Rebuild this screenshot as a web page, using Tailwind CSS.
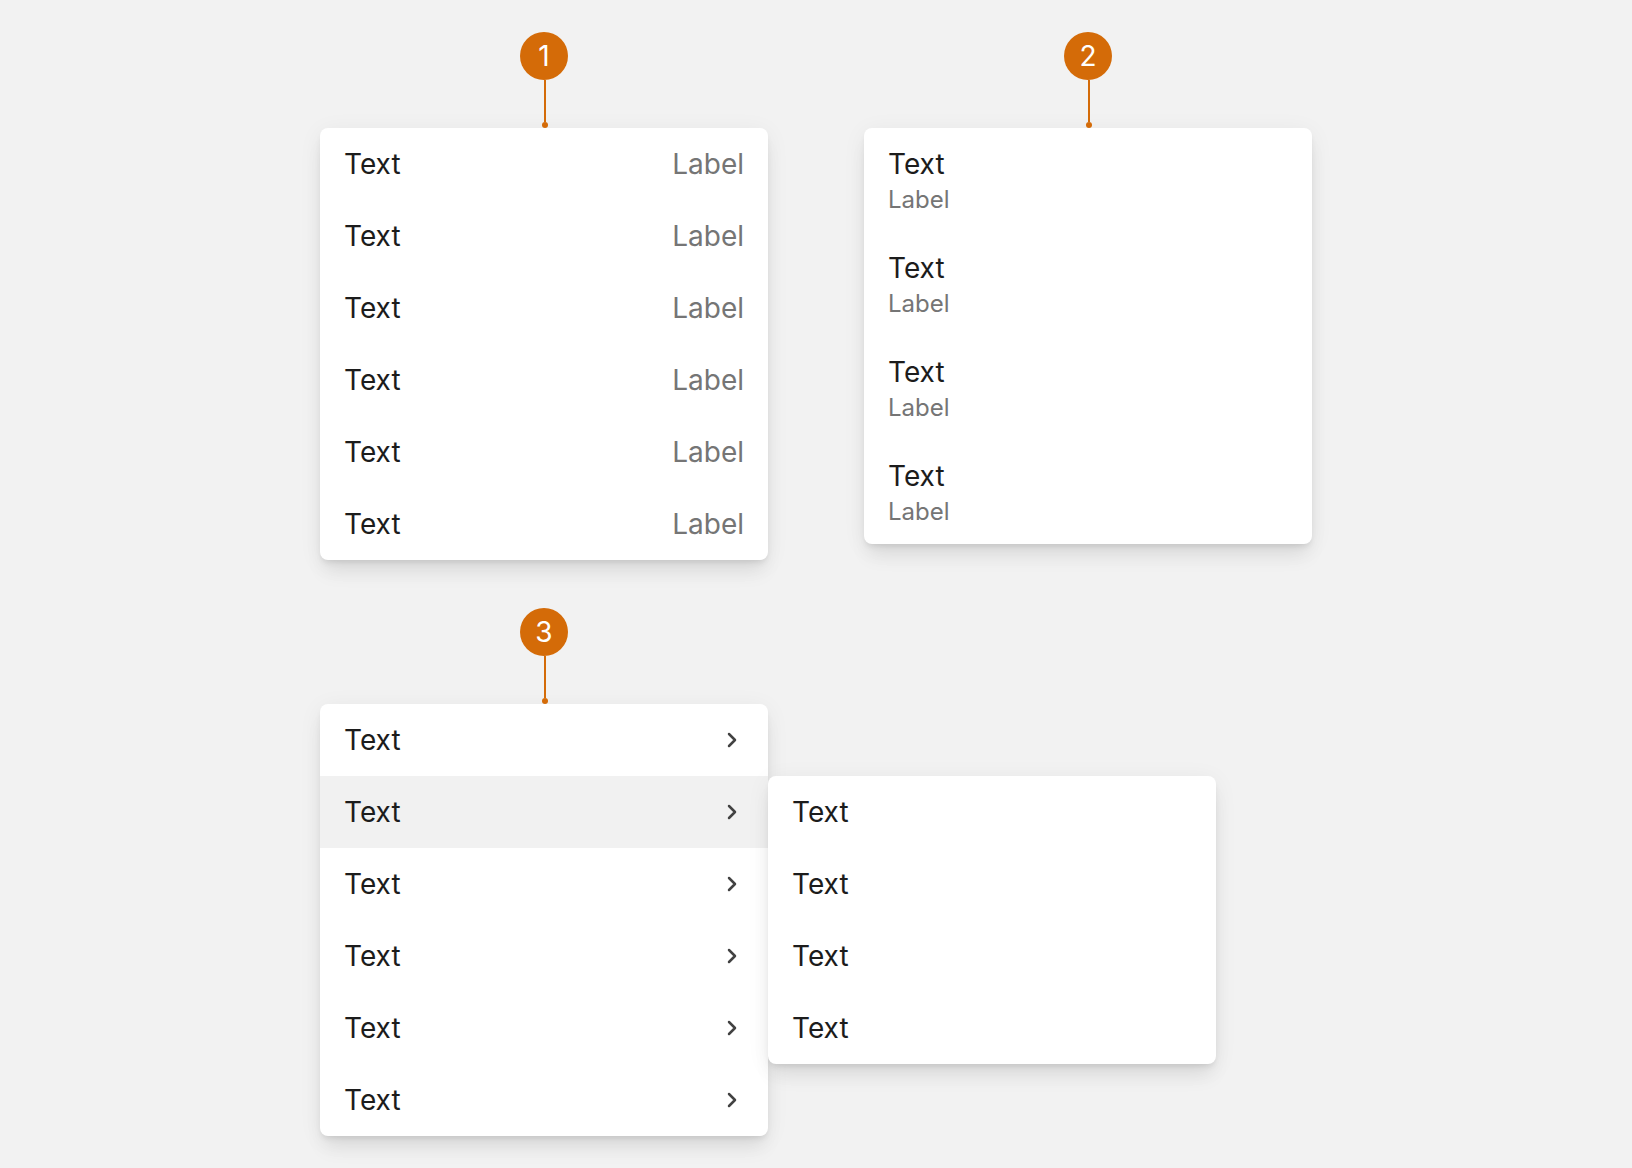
<!DOCTYPE html>
<html lang="en">
<head>
<meta charset="utf-8">
<meta name="viewport" content="width=device-width, initial-scale=1">
<title>Menu variants</title>
<script src="https://cdn.jsdelivr.net/npm/@tailwindcss/browser@4"></script>
</head>
<body class="min-h-screen bg-[#f2f2f2] font-[Inter,sans-serif] text-[28px] leading-10 text-[#1c1c1c]">
<main class="mx-auto grid max-w-[992px] grid-cols-2 items-start gap-x-24 gap-y-12 py-8">

  <!-- Inline label -->
  <section>
    <div class="flex flex-col items-center text-white">
      <span class="z-10 flex size-12 items-center justify-center rounded-full bg-[#d46b08]">1</span>
      <span class="ml-0.5 h-[42px] w-0.5 bg-[#d46b08]"></span>
      <span class="ml-0.5 size-1.5 rounded-full bg-[#d46b08]"></span>
    </div>
    <ul class="rounded-lg bg-white shadow-[0_16px_20px_-4px_rgba(0,0,0,0.07),0_4px_24px_rgba(0,0,0,0.06),0_4px_6px_-2px_rgba(0,0,0,0.1)]">
      <li><button class="flex w-full items-center justify-between px-6 py-4"><span>Text</span><span class="text-[#757575]">Label</span></button></li>
      <li><button class="flex w-full items-center justify-between px-6 py-4"><span>Text</span><span class="text-[#757575]">Label</span></button></li>
      <li><button class="flex w-full items-center justify-between px-6 py-4"><span>Text</span><span class="text-[#757575]">Label</span></button></li>
      <li><button class="flex w-full items-center justify-between px-6 py-4"><span>Text</span><span class="text-[#757575]">Label</span></button></li>
      <li><button class="flex w-full items-center justify-between px-6 py-4"><span>Text</span><span class="text-[#757575]">Label</span></button></li>
      <li><button class="flex w-full items-center justify-between px-6 py-4"><span>Text</span><span class="text-[#757575]">Label</span></button></li>
    </ul>
  </section>

  <!-- Stacked label -->
  <section>
    <div class="flex flex-col items-center text-white">
      <span class="z-10 flex size-12 items-center justify-center rounded-full bg-[#d46b08]">2</span>
      <span class="ml-0.5 h-[42px] w-0.5 bg-[#d46b08]"></span>
      <span class="ml-0.5 size-1.5 rounded-full bg-[#d46b08]"></span>
    </div>
    <ul class="rounded-lg bg-white shadow-[0_16px_20px_-4px_rgba(0,0,0,0.07),0_4px_24px_rgba(0,0,0,0.06),0_4px_6px_-2px_rgba(0,0,0,0.1)]">
      <li><button class="flex w-full flex-col items-start px-6 py-4"><span>Text</span><span class="text-2xl text-[#757575]">Label</span></button></li>
      <li><button class="flex w-full flex-col items-start px-6 py-4"><span>Text</span><span class="text-2xl text-[#757575]">Label</span></button></li>
      <li><button class="flex w-full flex-col items-start px-6 py-4"><span>Text</span><span class="text-2xl text-[#757575]">Label</span></button></li>
      <li><button class="flex w-full flex-col items-start px-6 py-4"><span>Text</span><span class="text-2xl text-[#757575]">Label</span></button></li>
    </ul>
  </section>

  <!-- Nested menu -->
  <section>
    <div class="flex flex-col items-center text-white">
      <span class="z-10 flex size-12 items-center justify-center rounded-full bg-[#d46b08]">3</span>
      <span class="ml-0.5 h-[42px] w-0.5 bg-[#d46b08]"></span>
      <span class="ml-0.5 size-1.5 rounded-full bg-[#d46b08]"></span>
    </div>
    <ul class="rounded-lg bg-white shadow-[0_16px_20px_-4px_rgba(0,0,0,0.07),0_4px_24px_rgba(0,0,0,0.06),0_4px_6px_-2px_rgba(0,0,0,0.1)]">
      <li><button class="flex w-full items-center justify-between px-6 py-4"><span>Text</span><svg class="size-6" viewBox="0 0 24 24" fill="none" stroke="#424242" stroke-width="2.5" stroke-linecap="round" stroke-linejoin="round"><path d="M9 6l6 6-6 6"/></svg></button></li>
      <li class="relative">
        <button class="flex w-full items-center justify-between bg-[#f1f1f1] px-6 py-4" aria-expanded="true"><span>Text</span><svg class="size-6" viewBox="0 0 24 24" fill="none" stroke="#424242" stroke-width="2.5" stroke-linecap="round" stroke-linejoin="round"><path d="M9 6l6 6-6 6"/></svg></button>
        <ul class="absolute top-0 left-full z-10 w-full rounded-lg bg-white shadow-[0_16px_20px_-4px_rgba(0,0,0,0.07),0_4px_24px_rgba(0,0,0,0.06),0_4px_6px_-2px_rgba(0,0,0,0.1)]">
          <li><button class="w-full px-6 py-4 text-left">Text</button></li>
          <li><button class="w-full px-6 py-4 text-left">Text</button></li>
          <li><button class="w-full px-6 py-4 text-left">Text</button></li>
          <li><button class="w-full px-6 py-4 text-left">Text</button></li>
        </ul>
      </li>
      <li><button class="flex w-full items-center justify-between px-6 py-4"><span>Text</span><svg class="size-6" viewBox="0 0 24 24" fill="none" stroke="#424242" stroke-width="2.5" stroke-linecap="round" stroke-linejoin="round"><path d="M9 6l6 6-6 6"/></svg></button></li>
      <li><button class="flex w-full items-center justify-between px-6 py-4"><span>Text</span><svg class="size-6" viewBox="0 0 24 24" fill="none" stroke="#424242" stroke-width="2.5" stroke-linecap="round" stroke-linejoin="round"><path d="M9 6l6 6-6 6"/></svg></button></li>
      <li><button class="flex w-full items-center justify-between px-6 py-4"><span>Text</span><svg class="size-6" viewBox="0 0 24 24" fill="none" stroke="#424242" stroke-width="2.5" stroke-linecap="round" stroke-linejoin="round"><path d="M9 6l6 6-6 6"/></svg></button></li>
      <li><button class="flex w-full items-center justify-between px-6 py-4"><span>Text</span><svg class="size-6" viewBox="0 0 24 24" fill="none" stroke="#424242" stroke-width="2.5" stroke-linecap="round" stroke-linejoin="round"><path d="M9 6l6 6-6 6"/></svg></button></li>
    </ul>
  </section>

</main>
</body>
</html>
